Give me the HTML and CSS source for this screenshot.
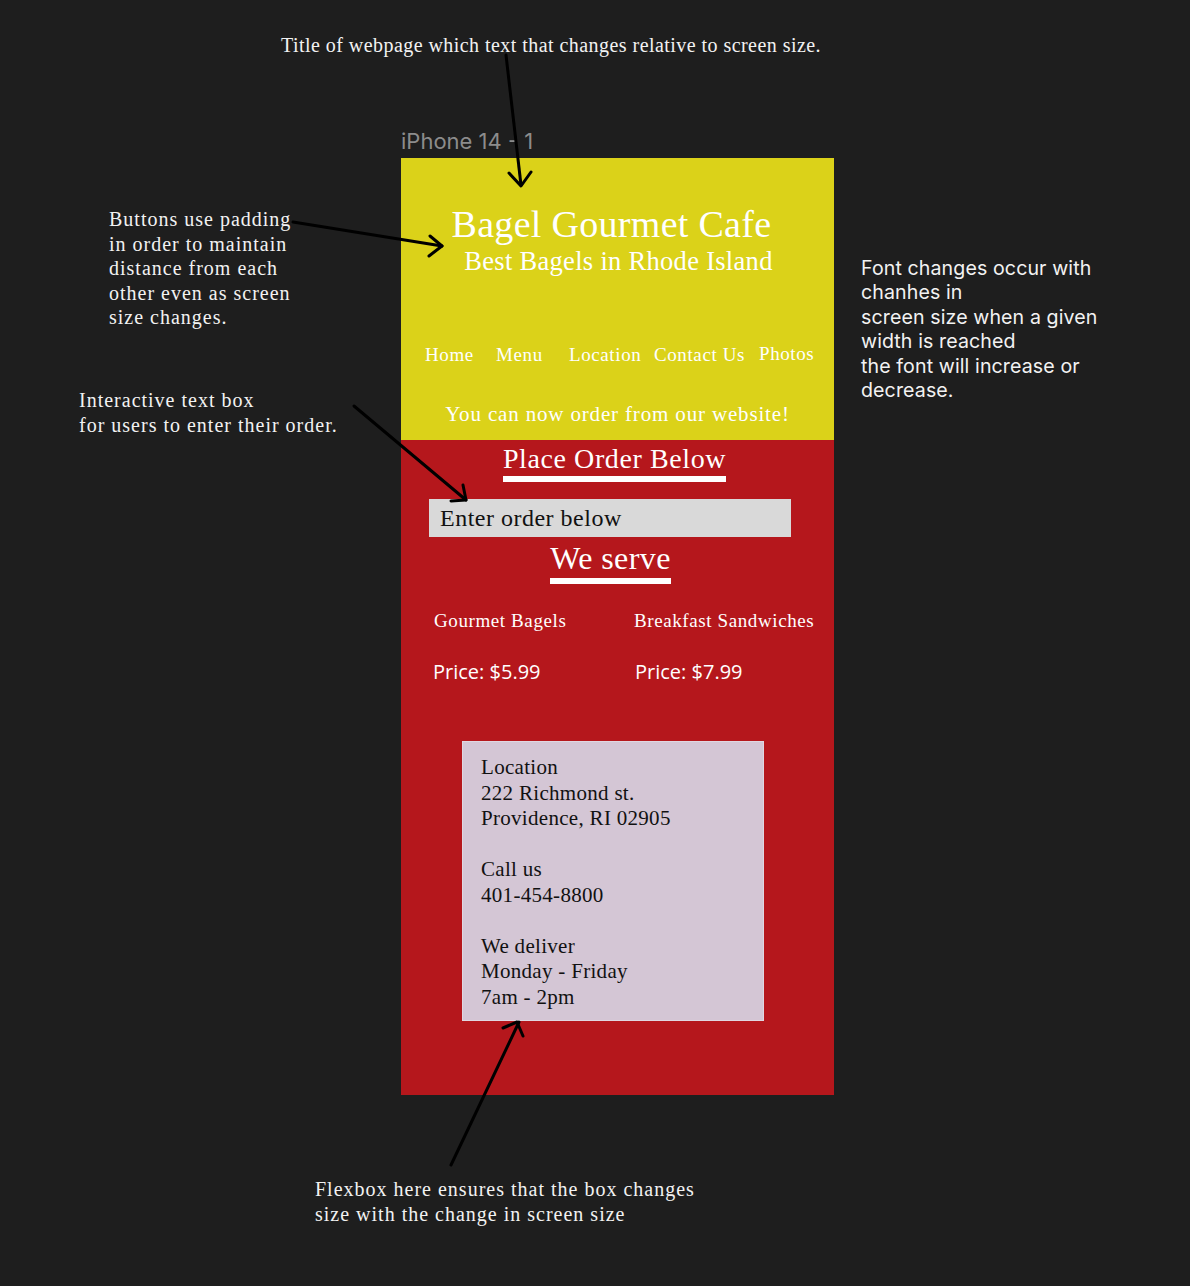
FILE: index.html
```html
<!DOCTYPE html>
<html>
<head>
<meta charset="utf-8">
<title>Bagel Gourmet Cafe - wireframe</title>
<link rel="stylesheet" href="styles.css">
</head>
<body>
<div class="canvas">
  <p class="note note-title">Title of webpage which text that changes relative to screen size.</p>
  <p class="note note-buttons">Buttons use padding<br>in order to maintain<br>distance from each<br>other even as screen<br>size changes.</p>
  <p class="note note-input">Interactive text box<br>for users to enter their order.</p>
  <p class="note note-font">Font changes occur with<br>chanhes in<br>screen size when a given<br>width is reached<br>the font will increase or<br>decrease.</p>
  <p class="note note-flex">Flexbox here ensures that the box changes<br>size with the change in screen size</p>

  <div class="frame-wrap">
    <div class="frame-label">iPhone 14 - 1</div>
    <div class="phone">
      <header class="hero">
        <h1 class="hero-title">Bagel Gourmet Cafe</h1>
        <p class="hero-sub">Best Bagels in Rhode Island</p>
        <nav class="nav">
          <a class="nav-link">Home</a>
          <a class="nav-link">Menu</a>
          <a class="nav-link">Location</a>
          <a class="nav-link">Contact Us</a>
          <a class="nav-link nav-up">Photos</a>
        </nav>
        <p class="hero-promo">You can now order from our website!</p>
      </header>
      <main class="body">
        <div class="center"><h2 class="heading heading-order">Place Order Below</h2></div>
        <input class="order-input" type="text" placeholder="Enter order below">
        <div class="center"><h2 class="heading heading-serve">We serve</h2></div>
        <div class="items">
          <div class="item-name">Gourmet Bagels</div>
          <div class="item-name">Breakfast Sandwiches</div>
        </div>
        <div class="items prices">
          <div class="price">Price: $5.99</div>
          <div class="price">Price: $7.99</div>
        </div>
        <div class="info">
          <p class="info-block">Location<br>222 Richmond st.<br>Providence, RI 02905</p>
          <p class="info-block">Call us<br>401-454-8800</p>
          <p class="info-block">We deliver<br>Monday - Friday<br>7am - 2pm</p>
        </div>
      </main>
    </div>
  </div>

  <svg class="arrows" width="1190" height="1286" viewBox="0 0 1190 1286">
    <g fill="none" stroke="#000" stroke-width="3" stroke-linecap="round" stroke-linejoin="round">
      <path d="M506 55 L521 185"/>
      <path d="M509 173 L521 186 L531 172"/>
      <path d="M293 222 L442 246"/>
      <path d="M430 236 L442 246 L429 256"/>
      <path d="M354 406 L466 500"/>
      <path d="M463 485 L466 500 L451 501"/>
      <path d="M451 1165 L519 1022"/>
      <path d="M503 1028 L517 1022 L523 1036"/>
    </g>
  </svg>
</div>
</body>
</html>
```
FILE: styles.css
```css
* { box-sizing: border-box; }
html, body { margin: 0; padding: 0; }
body {
  background: #1e1e1e;
  width: 1190px;
  height: 1286px;
  overflow: hidden;
}
.canvas {
  position: relative;
  width: 1190px;
  height: 1286px;
  padding: 126px 0 0 401px;
}

/* annotations placed on the free canvas */
.note {
  position: absolute;
  margin: 0;
  color: #f2f2f2;
  font-family: "Liberation Serif", serif;
  font-size: 20px;
  line-height: 24.5px;
  letter-spacing: 1px;
  white-space: nowrap;
}
.note-title { left: 281px; top: 33px; letter-spacing: 0.45px; }
.note-buttons { left: 109px; top: 207px; }
.note-input { left: 79px; top: 388px; }
.note-flex { left: 315px; top: 1177px; }
.note-font {
  left: 861px;
  top: 256px;
  font-family: "Inter", sans-serif;
  font-size: 19.6px;
  line-height: 24.4px;
  letter-spacing: 0.1px;
}

.arrows {
  position: absolute;
  left: 0;
  top: 0;
  pointer-events: none;
}

/* frame */
.frame-label {
  font-family: "Inter", sans-serif;
  font-size: 22px;
  line-height: 30px;
  color: #8c8c8c;
  height: 32px;
}
.phone {
  width: 433px;
  height: 937px;
  background: #b5171c;
  font-family: "Liberation Serif", serif;
  color: #fff;
}

.hero {
  height: 282px;
  background: #dbd219;
  padding-top: 44px;
  text-align: center;
}
.hero-title {
  margin: 0;
  font-weight: normal;
  font-size: 38px;
  line-height: 44px;
  letter-spacing: 0.3px;
  padding-right: 12px;
}
.hero-sub {
  margin: 0;
  font-size: 26.5px;
  line-height: 30px;
  letter-spacing: 0.3px;
  padding-left: 2px;
}
.nav {
  display: grid;
  grid-template-columns: 71px 73px 85px 105px auto;
  text-align: left;
  margin-top: 67px;
  padding: 0 0 0 24px;
}
.nav-link {
  font-size: 19px;
  line-height: 24px;
  letter-spacing: 0.6px;
  color: #fff;
}
.nav-up { position: relative; top: -1px; }
.hero-promo {
  margin: 34px 0 0;
  font-size: 21px;
  line-height: 26px;
  letter-spacing: 0.84px;
}

.body {
  padding-top: 2px;
}
.center { text-align: center; }
.heading {
  display: inline-block;
  margin: 0;
  font-weight: normal;
  border-bottom: 6px solid #fff;
  letter-spacing: 0.6px;
}
.heading-order {
  font-size: 28px;
  line-height: 34px;
  margin-left: -6px;
}
.heading-serve {
  font-size: 32px;
  line-height: 40px;
  margin-top: 1px;
  margin-left: -14px;
  letter-spacing: 0.4px;
}
.order-input {
  display: block;
  margin: 17px 0 0 28px;
  width: 362px;
  height: 38px;
  border: none;
  background: #d9d9d9;
  padding: 0 11px;
  font-family: "Liberation Serif", serif;
  font-size: 24px;
  letter-spacing: 0.5px;
  color: #111;
  outline: none;
}
.order-input::placeholder { color: #111; opacity: 1; }

.items {
  display: grid;
  grid-template-columns: 200px 201px;
  padding-left: 33px;
  margin-top: 25px;
}
.item-name {
  font-size: 19px;
  line-height: 24px;
  letter-spacing: 0.6px;
}
.prices { margin-top: 26px; padding-left: 32px; }
.price {
  font-family: "Open Sans", sans-serif;
  font-size: 20px;
  line-height: 26px;
}
.price + .price { padding-left: 2px; }

.info {
  margin: 56px 0 0 61px;
  width: 302px;
  height: 280px;
  background: #d4c6d5;
  border: 1px solid #e0d7e1;
  padding: 13px 18px 0;
  color: #111;
  font-size: 21px;
  line-height: 25.55px;
  letter-spacing: 0.3px;
}
.info-block { margin: 0 0 25.55px; }
```
